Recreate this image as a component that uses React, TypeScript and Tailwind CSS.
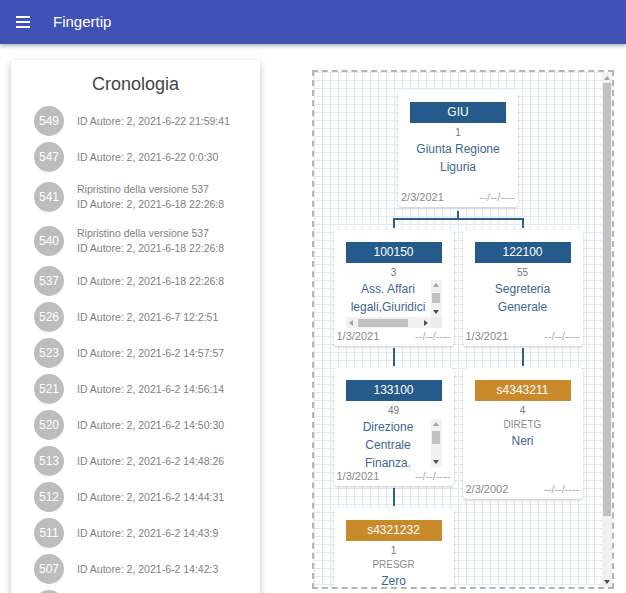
import type { ReactNode } from "react";

const HISTORY: { id: number; lines: string[] }[] = [
    { id: 549, lines: ["ID Autore: 2, 2021-6-22 21:59:41"] },
    { id: 547, lines: ["ID Autore: 2, 2021-6-22 0:0:30"] },
    { id: 541, lines: ["Ripristino della versione 537", "ID Autore: 2, 2021-6-18 22:26:8"] },
    { id: 540, lines: ["Ripristino della versione 537", "ID Autore: 2, 2021-6-18 22:26:8"] },
    { id: 537, lines: ["ID Autore: 2, 2021-6-18 22:26:8"] },
    { id: 526, lines: ["ID Autore: 2, 2021-6-7 12:2:51"] },
    { id: 523, lines: ["ID Autore: 2, 2021-6-2 14:57:57"] },
    { id: 521, lines: ["ID Autore: 2, 2021-6-2 14:56:14"] },
    { id: 520, lines: ["ID Autore: 2, 2021-6-2 14:50:30"] },
    { id: 513, lines: ["ID Autore: 2, 2021-6-2 14:48:26"] },
    { id: 512, lines: ["ID Autore: 2, 2021-6-2 14:44:31"] },
    { id: 511, lines: ["ID Autore: 2, 2021-6-2 14:43:9"] },
    { id: 507, lines: ["ID Autore: 2, 2021-6-2 14:42:3"] },
    { id: 506, lines: ["ID Autore: 2, 2021-6-2 14:40:12"] },
];

// ─── tiny scrollbar arrows ───
function Tri({ dir, dark }: { dir: "up" | "down" | "left" | "right"; dark?: boolean }) {
    const fill = dark ? "#505050" : "#a3a3a3";
    const d = {
        up: "M0 4 L3 0 L6 4Z",
        down: "M0 0 L6 0 L3 4Z",
        left: "M4 0 L4 6 L0 3Z",
        right: "M0 0 L4 3 L0 6Z",
    }[dir];
    const horiz = dir === "left" || dir === "right";
    return (
        <svg width={horiz ? 4 : 6} height={horiz ? 6 : 4} viewBox={horiz ? "0 0 4 6" : "0 0 6 4"}>
            <path d={d} fill={fill} />
        </svg>
    );
}

function VScroll({ h, thumbTop, thumbH }: { h: string; thumbTop: string; thumbH: string }) {
    return (
        <div className={`w-[11px] ${h} bg-[#f1f1f1] flex flex-col items-center shrink-0`}>
            <div className="h-[10px] flex items-center justify-center">
                <Tri dir="up" />
            </div>
            <div className={`w-[8px] ${thumbTop} ${thumbH} bg-[#c1c1c1]`} />
            <div className="mt-auto h-[10px] flex items-center justify-center">
                <Tri dir="down" dark />
            </div>
        </div>
    );
}

// ─── org chart node ───
function Node({
    code,
    orange,
    num,
    sub,
    h,
    date,
    children,
}: {
    code: string;
    orange?: boolean;
    num: string;
    sub?: string;
    h: string;
    date: string;
    children: ReactNode;
}) {
    return (
        <div className={`w-[120px] ${h} bg-white rounded-[4px] shadow-[0_1px_3px_rgba(0,0,0,0.22)] flex flex-col shrink-0`}>
            <div
                className={`mx-3 mt-3 h-[21px] text-white text-[12px] leading-[21px] text-center ${
                    orange ? "bg-[#c98a2c]" : "bg-[#245b8b]"
                }`}
            >
                {code}
            </div>
            <div className="mt-[3px] text-[10px] leading-[14px] text-center text-[#777]">{num}</div>
            {sub && <div className="text-[10px] leading-[14px] text-center text-[#8c8c8c]">{sub}</div>}
            {children}
            <div className="mt-auto flex justify-between px-[3px] pb-[3px] text-[11px] leading-[14px]">
                <span className="text-[#888]">{date}</span>
                <span className="text-[#a8a8a8]">--/--/----</span>
            </div>
        </div>
    );
}

function Name({ children }: { children: ReactNode }) {
    return <div className="text-[12px] leading-[18px] text-center text-[#3d6891]">{children}</div>;
}

function Link() {
    return <div className="mx-auto my-[2px] w-[2px] h-[18px] bg-[#2f5f8c]" />;
}

export default function App() {
    return (
        <div className="bg-white font-['Liberation_Sans',Arial,sans-serif] overflow-hidden h-[593px]">
            {/* ─── App bar ─── */}
            <header className="relative z-10 h-[44px] bg-[#3f51b5] flex items-center shadow-[0_2px_4px_rgba(0,0,0,0.3)]">
                <svg className="ml-4" width="14" height="12" viewBox="0 0 14 12">
                    <rect x="0" y="0" width="14" height="2" fill="white" />
                    <rect x="0" y="5" width="14" height="2" fill="white" />
                    <rect x="0" y="10" width="14" height="2" fill="white" />
                </svg>
                <span className="ml-[23px] text-white text-[15px]">Fingertip</span>
            </header>

            <div className="flex items-start">
                {/* ─── Cronologia ─── */}
                <div className="ml-[11px] mt-4 w-[249px] bg-white rounded-[4px] shadow-[0_2px_7px_rgba(0,0,0,0.25)] pb-4">
                    <h2 className="pt-3 pb-[7px] text-center text-[18px] leading-[24px] text-[#444]">Cronologia</h2>
                    {HISTORY.map((h) => (
                        <div key={h.id} className="flex items-center py-[3px] pl-[23px]">
                            <div className="w-[30px] h-[30px] rounded-full bg-[#bdbdbd] text-white text-[12px] flex items-center justify-center shrink-0">
                                {h.id}
                            </div>
                            <div className="ml-[13px] my-1 text-[10.5px] leading-[15px] text-[#808080]">
                                {h.lines.map((l, i) => (
                                    <div key={i}>{l}</div>
                                ))}
                            </div>
                        </div>
                    ))}
                </div>

                {/* ─── Org chart canvas ─── */}
                <div className="ml-[52px] mt-[26px] w-[302px] h-[519px] border-2 border-dashed border-[#b5b5b5] flex">
                    <div className="flex-1 overflow-hidden bg-[linear-gradient(#e1e9f2_1px,transparent_1px),linear-gradient(90deg,#e1e9f2_1px,transparent_1px)] bg-[length:8px_8px] bg-size-[8px_8px] pt-[18px] flex flex-col items-center">
                        <Node code="GIU" num="1" h="h-[117px]" date="2/3/2021">
                            <Name>Giunta Regione</Name>
                            <Name>Liguria</Name>
                        </Node>

                        <div className="w-[249px]">
                            <div className="mx-auto mt-1 w-[2px] h-[7px] bg-[#2f5f8c]" />
                            <div className="mx-[59px] h-[10px] border-t-2 border-x-2 border-[#2f5f8c]" />
                        </div>

                        <div className="mt-[2px] flex gap-[9px] items-start">
                            <div className="flex flex-col">
                                <Node code="100150" num="3" h="h-[116px]" date="1/3/2021">
                                    <div className="mx-3">
                                        <div className="flex">
                                            <div className="flex-1 h-[37px] overflow-hidden">
                                                <Name>Ass. Affari</Name>
                                                <Name>legali,Giuridici</Name>
                                            </div>
                                            <VScroll h="h-[37px]" thumbTop="mt-[3px]" thumbH="h-[10px]" />
                                        </div>
                                        <div className="flex h-[11px]">
                                            <div className="flex-1 bg-[#f1f1f1] flex items-center px-[3px]">
                                                <Tri dir="left" />
                                                <div className="ml-[5px] w-[50px] h-[8px] bg-[#c1c1c1]" />
                                                <div className="ml-auto">
                                                    <Tri dir="right" dark />
                                                </div>
                                            </div>
                                            <div className="w-[11px] bg-[#ebebeb]" />
                                        </div>
                                    </div>
                                </Node>
                                <Link />
                                <Node code="133100" num="49" h="h-[118px]" date="1/3/2021">
                                    <div className="mx-3 flex">
                                        <div className="flex-1 h-[50px] overflow-hidden">
                                            <Name>Direzione</Name>
                                            <Name>Centrale</Name>
                                            <Name>Finanza.</Name>
                                        </div>
                                        <div className="pt-px">
                                            <VScroll h="h-[48px]" thumbTop="mt-[2px]" thumbH="h-[13px]" />
                                        </div>
                                    </div>
                                </Node>
                                <Link />
                                <Node code="s4321232" orange num="1" sub="PRESGR" h="h-[117px]" date="1/3/2021">
                                    <Name>Zero</Name>
                                </Node>
                            </div>

                            <div className="flex flex-col">
                                <Node code="122100" num="55" h="h-[116px]" date="1/3/2021">
                                    <Name>Segreteria</Name>
                                    <Name>Generale</Name>
                                </Node>
                                <Link />
                                <Node code="s4343211" orange num="4" sub="DIRETG" h="h-[131px]" date="2/3/2002">
                                    <Name>Neri</Name>
                                </Node>
                            </div>
                        </div>
                    </div>

                    {/* scrollbar */}
                    <div className="w-[10px] bg-[#f1f1f1] flex flex-col items-center">
                        <div className="h-[11px] flex items-center justify-center">
                            <Tri dir="up" />
                        </div>
                        <div className="w-[8px] h-[433px] bg-[#c1c1c1]" />
                        <div className="mt-auto h-[11px] flex items-center justify-center">
                            <Tri dir="down" dark />
                        </div>
                    </div>
                </div>
            </div>
        </div>
    );
}
